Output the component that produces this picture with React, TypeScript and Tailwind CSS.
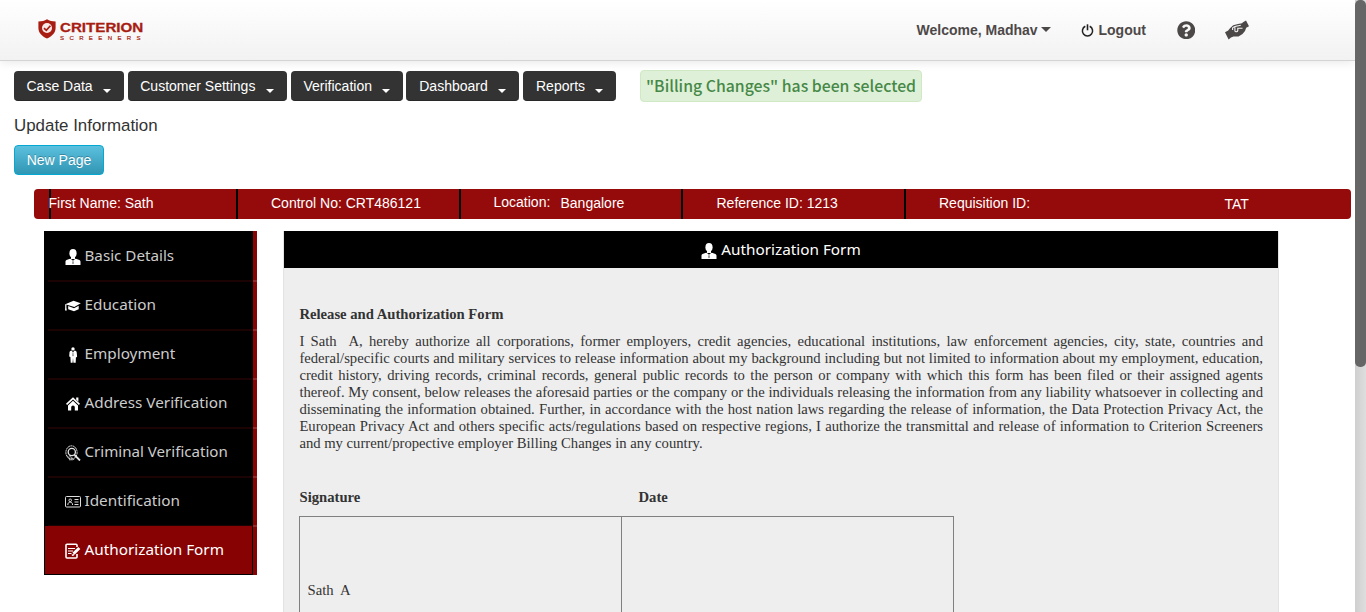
import React from "react";
import { FaQuestionCircle } from "react-icons/fa";

const menu = [
  { label: "Case Data", width: "w-[110px] pl-[12.500px]" },
  { label: "Customer Settings", width: "w-[159px] pl-[12.500px]" },
  { label: "Verification", width: "w-[112px] pl-[13px]" },
  { label: "Dashboard", width: "w-[113px] pl-[13px]" },
  { label: "Reports", width: "w-[93px] pl-[13px]" },
];

function Caret({ className = "" }: { className?: string }) {
  return (
    <span
      className={`inline-block h-0 w-0 border-x-transparent ${className}`}
    />
  );
}

function PowerIcon() {
  return (
    <svg viewBox="0 0 13 13" className="ml-[30px] h-[13px] w-[13px]" fill="none" stroke="#222" strokeWidth="1.500">
      <path d="M4.300 2.300a5.100 5.100 0 1 0 4.400 0" />
      <path d="M6.500.3v6" strokeWidth="1.600" />
    </svg>
  );
}

function HandsIcon() {
  return (
    <svg viewBox="0 0 24 20" className="ml-[30px] h-[20px] w-[24px]" fill="#4d4848">
      <path d="M0 12.200 3.200 10.600 5 8.200 8.200 5.200 13 4 17 3.200 18 2.300 21 .6 24 6.200 21.200 7.800 20 11 17.500 14 13.500 16.400 8.500 16.600 6 17.500 3.600 19.400Z" />
      <path d="M7.600 10V7.900c1.600-1.700 4.500-2 8.200-2.600M9.900 7.200v3.600c.3 1.300 2.500 1.300 2.900-.3V8.300h4.700" fill="none" stroke="#f5f5f5" strokeWidth="1.100" />
    </svg>
  );
}

function PersonIcon() {
  return (
    <svg viewBox="0 0 16 16" className="h-4 w-4" fill="#fff">
      <ellipse cx="8" cy="4.300" rx="3.600" ry="4.300" />
      <path d="M6 7h4v3H6z" />
      <path d="M0.500 16v-3.200c0-1.400 1-2 5-3l2.500 1.800 2.500-1.800c4 1 5 1.600 5 3V16z" />
      <path d="M7.300 11.300h1.400l-.3 1.200.5 1.700-.9 1-.9-1 .5-1.700z" fill="#777" />
    </svg>
  );
}

function CapIcon() {
  return (
    <svg viewBox="0 0 16 16" className="h-4 w-4" fill="#fff">
      <path d="M0.300 6.200 8.500 2.800l7.300 2.400-6.500 3.900z" />
      <path d="M3.200 8l5.800 2.200 4.700-2.500v3.500L9 13.300l-5.800-2z" />
      <path d="M.2 6.300h1.200v3.500l.4 2.800H0l.2-2.800z" />
    </svg>
  );
}

function StandingIcon() {
  return (
    <svg viewBox="0 0 16 16" className="h-4 w-4" fill="#fff">
      <circle cx="8" cy="1.900" r="1.700" />
      <path d="M4.500 5.300c.3-1.200 1.200-1.600 2-1.700L8 5.200l1.600-1.600c1.100.1 1.800.6 2.100 1.700l.4 4.400-1.200.8-.2 5.300H8.400L8 11l-.4 4.800H5.700l-.3-5.700-1.200-.6z" />
      <path d="M7.600 5.200h.8l.3 3.300-.7.900-.7-.9z" fill="#888" />
    </svg>
  );
}

function HouseIcon() {
  return (
    <svg viewBox="0 0 16 16" className="h-4 w-4" fill="#fff">
      <path d="M8 1.300 15 7.800l-1.100 1.200L8 3.600 2.100 9 1 7.800z" />
      <path d="M11.200 1.500h2.200v4.200l-2.200-2z" />
      <path d="M8 4.800l5 4.600V14.500H9.800v-3.200a1.800 1.800 0 0 0-3.600 0v3.200H3V9.400z" />
    </svg>
  );
}

function FingerprintIcon() {
  return (
    <svg viewBox="0 0 16 16" className="h-4 w-4" fill="none" stroke="#e6e6e6">
      <ellipse cx="6.500" cy="7.500" rx="5.600" ry="6.700" strokeDasharray="2 .5" strokeWidth="1" />
      <circle cx="6.800" cy="7" r="3.600" strokeWidth="1.300" />
      <path d="M1.500 10.500c2 1 3 2.500 3.500 5M4 10.500c2 1 2.600 2.500 3 5M7 12.500l2 2.500" strokeWidth=".8" />
      <path d="M9.500 10l5.500 5.500" strokeWidth="1.800" />
    </svg>
  );
}

function CardIcon() {
  return (
    <svg viewBox="0 0 16 16" className="h-4 w-4" fill="none" stroke="#ddd">
      <rect x=".5" y="2.500" width="15" height="10.500" rx="1" />
      <circle cx="5.200" cy="6.300" r="1.300" />
      <path d="M2.800 11c0-2 1-2.800 2.400-2.800s2.400.8 2.400 2.800M9.500 5.500h4M9.500 8h4M9.500 10.500h4" />
    </svg>
  );
}

function FormIcon() {
  return (
    <svg viewBox="0 0 16 16" className="h-4 w-4" fill="none" stroke="#fff">
      <path d="M12 4V2.300a1 1 0 0 0-1-1H2a1 1 0 0 0-1 1v11.700a1 1 0 0 0 1 1h9a1 1 0 0 0 1-1V11" strokeWidth="1.600" />
      <path d="M3 5.500h7M3 8h5M3 10.500h3.500" />
      <path d="M8.500 10.700 14.300 5" strokeWidth="3" />
      <path d="M6.800 12.300l2.200-.5" strokeWidth="1.500" />
    </svg>
  );
}

function ShieldLogo() {
  return (
    <svg viewBox="0 0 18 20" className="h-[20px] w-[18px]">
      <path d="M9 .3c2.500 1.500 5 2.100 8.600 2.300v6.300c0 5-3.800 8.400-8.600 10.600C4.200 17.300.4 13.900.4 8.900V2.600C4 2.400 6.500 1.800 9 .3z" fill="#a81d12" />
      <circle cx="9" cy="9" r="5" fill="#f7e9e8" />
      <path d="M6 9.200l2.300 2.200 4.100-4.600" fill="none" stroke="#a81d12" strokeWidth="1.700" />
    </svg>
  );
}

const sections = [
  { label: "Basic Details", icon: <PersonIcon />, text: "text-[15.200px]" },
  { label: "Education", icon: <CapIcon />, text: "text-[15.300px]" },
  { label: "Employment", icon: <StandingIcon />, text: "text-[15.300px]" },
  { label: "Address Verification", icon: <HouseIcon />, text: "text-[15.300px]" },
  { label: "Criminal Verification", icon: <FingerprintIcon />, text: "text-[15.100px]" },
  { label: "Identification", icon: <CardIcon />, text: "text-[15.300px]" },
];

function Header() {
  return (
    <header className="flex h-[61px] shrink-0 border-b border-[#d4d4d4] bg-linear-to-b from-white to-[#f2f2f2] text-[14px] font-bold text-[#4d4848] shadow-[0_1px_10px_rgba(0,0,0,0.1)]">
      <div className="flex w-[916.500px] pt-[19px] pl-[37.500px]">
        <ShieldLogo />
        <div className="pt-[2px] pl-[4.500px] text-[#a81d12]">
          <div className="origin-left scale-x-[1.165] text-[13px] leading-[13px] whitespace-nowrap [-webkit-text-stroke:0.3px_#a81d12]">CRITERION</div>
          <div className="pt-px text-[6px] leading-[6px] font-normal tracking-[5.400px] whitespace-nowrap [-webkit-text-stroke:0.2px_#a81d12]">SCREENERS</div>
        </div>
      </div>
      <div className="flex h-[60px] items-center whitespace-nowrap">
        <span className="w-[124.500px] leading-5">Welcome, Madhav</span>
        <Caret className="-mt-px border-x-[5px] border-t-[5px] border-t-[#4d4848]" />
        <PowerIcon />
        <span className="ml-[4.500px] w-[78px]">Logout</span>
        <FaQuestionCircle className="h-[18.500px] w-[18.500px]" />
        <HandsIcon />
      </div>
    </header>
  );
}

function Toolbar() {
  return (
    <div className="flex h-[32px] pl-[14px] text-[14px] text-white">
      <nav className="flex w-[626px] gap-[4px] pt-px">
        {menu.map((item) => (
          <button
            key={item.label}
            className={`-mr-[0.250px] flex h-[30px] shrink-0 items-center justify-between rounded-[4px] border-b border-[#282828] bg-[#333] pr-[13px] whitespace-nowrap ${item.width}`}
          >
            <span className="pt-px">{item.label}</span>
            <Caret className="mt-[10px] border-x-4 border-t-4 border-t-white" />
          </button>
        ))}
      </nav>
      <div className="flex h-[32px] w-[282px] items-center justify-center rounded-[4px] border border-[#d0e8c4] bg-[#dff0d8] font-['Noto_Sans_CJK_SC',sans-serif] text-[15.800px] font-medium whitespace-nowrap text-[#468847]">
        "Billing Changes" has been selected
      </div>
    </div>
  );
}

function SummaryBar() {
  return (
    <div className="ml-[34px] flex h-[30px] w-[1317px] rounded-[4px] bg-[#950a0b] text-[14px] leading-[28px] whitespace-nowrap text-white">
      <div className="w-[15px]" />
      <div className="w-[189px] border-r-2 border-l-2 border-black"><span className="-ml-[2.500px]">First Name: Sath</span></div>
      <div className="w-[223px] border-r-2 border-black pl-[33px]">Control No: CRT486121</div>
      <div className="flex w-[222px] border-r-2 border-black pl-[32.500px]">
        <span className="w-[67px] leading-[26px]">Location:</span>
        <span>Bangalore</span>
      </div>
      <div className="w-[223px] border-r-2 border-black pl-[33.500px]">Reference ID: 1213</div>
      <div className="w-[318px] pl-[33px]">Requisition ID:</div>
      <div className="pl-[0.500px] leading-[30px]">TAT</div>
    </div>
  );
}

function Sidebar() {
  return (
    <aside className="h-[344px] w-[213px] bg-black font-['Noto_Sans',sans-serif] text-[15.300px] text-[#ccc]">
      <div className="ml-auto h-[2px] w-[4px] bg-[#870203]" />
      {sections.map((s) => (
        <div key={s.label} className="flex h-[49px] pl-[4px] whitespace-nowrap">
          <div className="flex w-[205px] border-b-2 border-[#1c0303] pt-[12px] pl-[17px]">
            <span className="mt-[4px] mr-[3.500px] h-4">{s.icon}</span>
            <span className={`leading-[20px] ${s.text}`}>{s.label}</span>
          </div>
          <div className="w-[4px] border-b-2 border-[#95282a] bg-[#870203]" />
        </div>
      ))}
      <div className="-mt-px flex h-[49px]">
        <div className="mb-px ml-px flex w-[207px] bg-[#870203] pt-[13px] pl-[20px] whitespace-nowrap text-white">
          <span className="mt-[4px] mr-[3.500px]"><FormIcon /></span>
          <span className="leading-[20px]">Authorization Form</span>
        </div>
        <div className="mt-px ml-px w-[4px] bg-[#870203]" />
      </div>
    </aside>
  );
}

function FormPanel() {
  return (
    <section className="h-[381px] w-[996px] overflow-hidden border-x border-[#e3e3e3] bg-[#eee]">
      <div className="flex h-[37px] items-center justify-center bg-black font-['Noto_Sans',sans-serif] text-[15.300px] text-white">
        <span className="mt-[2px] mr-[4px]"><PersonIcon /></span>
        <span>Authorization Form</span>
      </div>
      <div className="px-[15px] pt-[38px] font-['Liberation_Serif',serif] text-[14.667px] leading-[17px] text-[#333]">
        <h2 className="pl-[0.400px] font-bold">Release and Authorization Form</h2>
        <p className="mt-[10px] pl-[0.400px] text-justify">
          I Sath&nbsp; A, hereby authorize all corporations, former employers, credit agencies, educational institutions, law enforcement agencies, city, state, countries and federal/specific courts and military services to release information about my background including but not limited to information about my employment, education, credit history, driving records, criminal records, general public records to the person or company with which this form has been filed or their assigned agents thereof. My consent, below releases the aforesaid parties or the company or the individuals releasing the information from any liability whatsoever in collecting and disseminating the information obtained. Further, in accordance with the host nation laws regarding the release of information, the Data Protection Privacy Act, the European Privacy Act and others specific acts/regulations based on respective regions, I authorize the transmittal and release of information to Criterion Screeners and my current/propective employer Billing Changes in any country.
        </p>
        <div className="mt-[37px] flex pl-[0.500px] font-bold">
          <span className="w-[339px]">Signature</span>
          <span>Date</span>
        </div>
        <div className="mt-[10px] flex h-[130px] w-[655px] border border-[#808080]">
          <div className="w-[322px] border-r border-[#808080] pt-[65px] pl-[7.500px]">Sath&nbsp; A</div>
          <div />
        </div>
      </div>
    </section>
  );
}

export default function App() {
  return (
    <div className="flex h-[612px] w-[1366px] overflow-hidden bg-white font-['Liberation_Sans',sans-serif]">
      <main className="flex h-[612px] w-[1355px] flex-col overflow-hidden">
        <Header />
        <div className="pt-[9px]">
          <Toolbar />
          <h1 className="pt-[14px] pl-[14px] text-[16.900px] leading-[20px] text-[#333]">Update Information</h1>
          <button className="mt-[9px] ml-[14px] block h-[30px] w-[90px] rounded-[4px] border border-[#04a8d0] bg-linear-to-b from-[#5bc0de] to-[#2f96b4] text-[14px] text-white [text-shadow:0_-1px_0_rgba(0,0,0,0.25)]">
            New Page
          </button>
          <div className="pt-[14px]">
            <SummaryBar />
          </div>
          <div className="flex gap-[26px] pt-[12px] pl-[44px]">
            <Sidebar />
            <FormPanel />
          </div>
        </div>
      </main>
      <div className="h-[612px] w-[11px] bg-linear-to-r from-[#cfcfcf] to-[#dedede]">
        <div className="h-[367px] rounded-[5px] bg-[#666]" />
      </div>
    </div>
  );
}
